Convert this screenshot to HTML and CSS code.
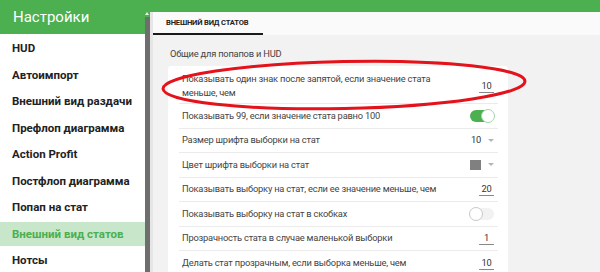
FILE: index.html
```html
<!DOCTYPE html>
<html>
<head>
    <title>Настройки</title>
    <link rel="stylesheet" href="styles.css">
</head>
<body>
    <div class="app">
        <aside class="sidebar">
            <div class="sidebar-head">Настройки</div>
            <ul class="menu">
                <li>HUD</li>
                <li>Автоимпорт</li>
                <li>Внешний вид раздачи</li>
                <li>Префлоп диаграмма</li>
                <li>Action Profit</li>
                <li>Постфлоп диаграмма</li>
                <li>Попап на стат</li>
                <li class="active">Внешний вид статов</li>
                <li>Нотсы</li>
            </ul>
            <div class="scrollbar"><span class="scroll-arrow"></span></div>
        </aside>

        <main class="content">
            <div class="topbar"></div>
            <div class="panel">
                <div class="tabs">
                    <div class="tab active">Внешний вид статов</div>
                </div>

                <div class="group">
                    <div class="group-title">Общие для попапов и HUD</div>
                    <div class="card">
                        <div class="row">
                            <div class="label">Показывать один знак после запятой, если значение стата меньше, чем</div>
                            <div class="num">10</div>
                        </div>
                        <div class="row">
                            <div class="label">Показывать 99, если значение стата равно 100</div>
                            <div class="toggle on"><span class="knob"></span></div>
                        </div>
                        <div class="row">
                            <div class="label">Размер шрифта выборки на стат</div>
                            <div class="select">10 <span class="caret"></span></div>
                        </div>
                        <div class="row">
                            <div class="label">Цвет шрифта выборки на стат</div>
                            <div class="select"><span class="swatch"></span><span class="caret"></span></div>
                        </div>
                        <div class="row">
                            <div class="label">Показывать выборку на стат, если ее значение меньше, чем</div>
                            <div class="num">20</div>
                        </div>
                        <div class="row">
                            <div class="label">Показывать выборку на стат в скобках</div>
                            <div class="toggle"><span class="knob"></span></div>
                        </div>
                        <div class="row">
                            <div class="label">Прозрачность стата в случае маленькой выборки</div>
                            <div class="num">1</div>
                        </div>
                        <div class="row">
                            <div class="label">Делать стат прозрачным, если выборка меньше, чем</div>
                            <div class="num">10</div>
                        </div>
                    </div>
                </div>
            </div>
        </main>

        <!-- red hand-drawn mark over the first option -->
        <svg class="mark" width="600" height="272" viewBox="0 0 600 272">
            <ellipse cx="344" cy="85" rx="181" ry="23.5" transform="rotate(-1.2 344 85)" fill="none" stroke="#e3121b" stroke-width="3"/>
        </svg>
    </div>
</body>
</html>
```

FILE: styles.css
```css
body {
    margin: 0;
    font-family: Roboto, "Liberation Sans", sans-serif;
    overflow: hidden;
}

.app {
    position: relative;
    display: flex;
    width: 600px;
    height: 272px;
    overflow: hidden;
}

.sidebar {
    position: relative;
    width: 150px;
    flex-shrink: 0;
    background: #fff;
}

.sidebar-head {
    height: 34px;
    padding-left: 13px;
    line-height: 35px;
    background: #4caf50;
    color: #fff;
    font-size: 15px;
}

.menu {
    list-style: none;
    margin: 0;
    padding: 2px 0 0;
    width: 145px;
}

.menu li {
    height: 24px;
    line-height: 24px;
    margin-bottom: 2.5px;
    padding-left: 12px;
    font-size: 11.5px;
    font-weight: bold;
    color: #222;
    white-space: nowrap;
}

.menu li.active {
    background: #c8e6c9;
    color: #4caf50;
}

.scrollbar {
    position: absolute;
    right: 0;
    top: 17px;
    bottom: 0;
    width: 5px;
    background: #6e6e6e;
}

.scroll-arrow {
    position: absolute;
    left: 0;
    top: -5px;
    border-left: 2.5px solid transparent;
    border-right: 2.5px solid transparent;
    border-bottom: 3px solid #e8f5e9;
}

.content {
    flex: 1;
    display: flex;
    flex-direction: column;
    background: #e6e6e6;
    overflow: hidden;
}

.topbar {
    flex-shrink: 0;
    height: 12px;
    background: #4caf50;
}

.panel {
    flex: 1;
    margin-left: 3px;
    background: #f2f2f2;
    overflow: hidden;
}

.tabs {
    display: flex;
    height: 23px;
    background: #fafafa;
}

.tab {
    width: 110px;
    box-sizing: border-box;
    padding-left: 13px;
    line-height: 21px;
    font-size: 7.6px;
    letter-spacing: -0.2px;
    font-weight: bold;
    text-transform: uppercase;
    white-space: nowrap;
    color: #222;
    border-bottom: 2px solid #1a1a1a;
}

.group {
    padding: 13px 92px 0 15px;
}

.group-title {
    padding-left: 2px;
    height: 18px;
    font-size: 9.3px;
    letter-spacing: -0.2px;
    color: #444;
}

.card {
    background: #fff;
    border-radius: 3px 3px 0 0;
    padding: 3px 10px 0 11px;
}

.row {
    display: flex;
    align-items: center;
    box-sizing: border-box;
    min-height: 24.5px;
    padding: 3px 4px 3px 3px;
    border-bottom: 1px solid #ebebeb;
    font-size: 9.3px;
    letter-spacing: -0.2px;
    line-height: 14px;
    color: #444;
}

.label {
    max-width: 267px;
    margin-right: auto;
}

.num {
    width: 15px;
    text-align: center;
    line-height: 13px;
    border-bottom: 1px solid #888;
    color: #333;
}

.select {
    display: flex;
    align-items: center;
    gap: 4px;
    color: #333;
}

.caret {
    display: inline-block;
    margin-left: 3px;
    border-left: 3px solid transparent;
    border-right: 3px solid transparent;
    border-top: 3px solid #b5b5b5;
}

.swatch {
    width: 11px;
    height: 10px;
    background: #808080;
}

.toggle {
    position: relative;
    width: 24px;
    height: 12px;
    border-radius: 6px;
    background: #f2f2f2;
}

.toggle .knob {
    position: absolute;
    left: -1px;
    top: -1px;
    width: 12px;
    height: 12px;
    border-radius: 50%;
    background: #fff;
    border: 1px solid #c8c8c8;
}

.toggle.on {
    background: #4caf50;
}

.toggle.on .knob {
    left: auto;
    right: -1px;
    border-color: #a5d6a7;
}

.mark {
    position: absolute;
    left: 0;
    top: 0;
    pointer-events: none;
}
```
